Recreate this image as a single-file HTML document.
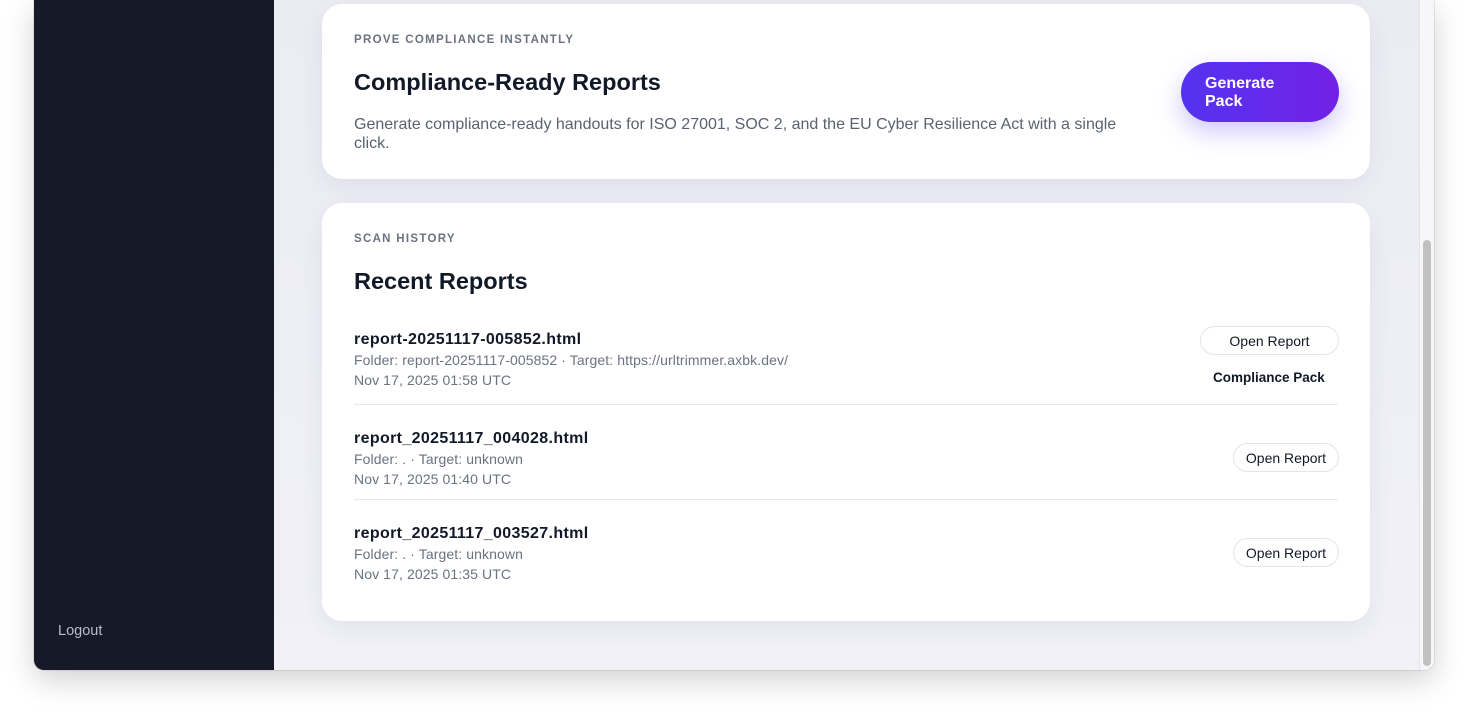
<!DOCTYPE html>
<html><head><style>
*{margin:0;padding:0;box-sizing:border-box}
body{width:1468px;height:712px;background:#fff;font-family:"Liberation Sans",sans-serif;position:relative;overflow:hidden}
.win{position:absolute;left:34px;top:0;width:1400px;height:670px;border-radius:0 0 10px 10px;overflow:hidden;box-shadow:0 10px 30px rgba(0,0,0,.18),0 0 0 1px rgba(0,0,0,.08);background:linear-gradient(180deg,#ebebf3,#f1f1f7)}
.side{position:absolute;left:0;top:0;width:240px;height:670px;background:#161927}
.logout{position:absolute;left:24px;top:623px;color:#b9bcc7;font-size:14.5px}
.a{position:absolute;white-space:nowrap}
.card{position:absolute;left:288px;width:1048px;background:#fff;border-radius:20px;box-shadow:0 8px 24px rgba(60,60,110,.07)}
.eb{font-size:11.5px;font-weight:bold;letter-spacing:1.3px;color:#6b7280}
.h{font-size:23.5px;font-weight:bold;color:#111827}
.n{font-size:16px;font-weight:bold;color:#111827;letter-spacing:.35px}
.m{font-size:14px;color:#6b7280;letter-spacing:.1px}
.btn{position:absolute;height:29px;border:1px solid #e2e5ee;border-radius:15px;background:#fff;font-size:14px;color:#111827;text-align:center;line-height:28px}
.div{position:absolute;left:32px;width:984px;height:1px;background:#e4e7ee}
.sb{position:absolute;left:1385px;top:0;width:15px;height:670px;background:#f7f7f9;border-left:1px solid #e4e4e8}
.th{position:absolute;left:1389px;top:240px;width:8px;height:426px;border-radius:4px;background:#c1c1c1}
</style></head><body>
<div class="win">
<div class="side"><div class="logout">Logout</div></div>
<div class="card" style="top:4px;height:175px">
 <div class="a eb" style="left:32px;top:30px">PROVE COMPLIANCE INSTANTLY</div>
 <div class="a h" style="left:32px;top:65px">Compliance-Ready Reports</div>
 <div class="a" style="left:32px;top:111px;width:790px;white-space:normal;font-size:16px;line-height:19px;color:#5b6170">Generate compliance-ready handouts for ISO 27001, SOC 2, and the EU Cyber Resilience Act with a single click.</div>
 <div class="a" style="left:859px;top:58px;width:158px;height:60px;border-radius:30px;background:linear-gradient(90deg,#5433f0,#7321e6);box-shadow:0 10px 24px rgba(100,70,240,.3);color:#fff;font-weight:bold;font-size:16px;line-height:18px;padding:13px 0 0 24px;white-space:normal">Generate<br>Pack</div>
</div>
<div class="card" style="top:203px;height:418px">
 <div class="a eb" style="left:32px;top:30px">SCAN HISTORY</div>
 <div class="a h" style="left:32px;top:65px">Recent Reports</div>
 <div class="a n" style="left:32px;top:128px">report-20251117-005852.html</div>
 <div class="a m" style="left:32px;top:149px">Folder: report-20251117-005852 · Target: https://urltrimmer.axbk.dev/</div>
 <div class="a m" style="left:32px;top:169px">Nov 17, 2025 01:58 UTC</div>
 <div class="btn" style="left:878px;top:123px;width:139px">Open Report</div>
 <div class="a" style="left:891px;top:167px;font-size:13.5px;font-weight:bold;color:#111827">Compliance Pack</div>
 <div class="div" style="top:201px"></div>
 <div class="a n" style="left:32px;top:227px">report_20251117_004028.html</div>
 <div class="a m" style="left:32px;top:248px">Folder: . · Target: unknown</div>
 <div class="a m" style="left:32px;top:268px">Nov 17, 2025 01:40 UTC</div>
 <div class="btn" style="left:911px;top:240px;width:106px">Open Report</div>
 <div class="div" style="top:296px"></div>
 <div class="a n" style="left:32px;top:322px">report_20251117_003527.html</div>
 <div class="a m" style="left:32px;top:343px">Folder: . · Target: unknown</div>
 <div class="a m" style="left:32px;top:363px">Nov 17, 2025 01:35 UTC</div>
 <div class="btn" style="left:911px;top:335px;width:106px">Open Report</div>
</div>
<div class="sb"></div><div class="th"></div>
</div>
</body></html>
